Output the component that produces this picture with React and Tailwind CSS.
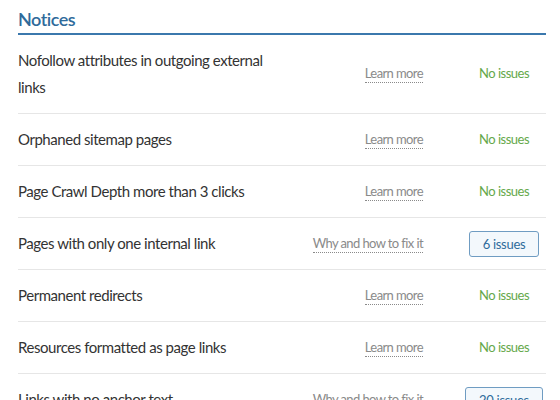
import React from 'react';

const rows = [
  { name: 'Nofollow attributes in outgoing external links', link: 'Learn more', issues: 0 },
  { name: 'Orphaned sitemap pages', link: 'Learn more', issues: 0 },
  { name: 'Page Crawl Depth more than 3 clicks', link: 'Learn more', issues: 0 },
  { name: 'Pages with only one internal link', link: 'Why and how to fix it', issues: 6 },
  { name: 'Permanent redirects', link: 'Learn more', issues: 0 },
  { name: 'Resources formatted as page links', link: 'Learn more', issues: 0 },
  { name: 'Links with no anchor text', link: 'Why and how to fix it', issues: 20 },
];

export default function App() {
  return (
    <div className="w-[560px] h-[400px] overflow-hidden bg-white font-['Lato',sans-serif] text-[#333]">
      <div className="ml-[18px] w-[528px]">
        <h2 className="pt-[8px] pb-[3px] text-[18px] leading-[22px] tracking-[-0.5px] font-semibold text-[#2f6b9b] border-b-2 border-[#3b78ad]">
          Notices
        </h2>
        <ul>
          {rows.map((r) => (
            <li key={r.name} className="flex items-center py-[12px] border-b border-[#e6e6e6]">
              <div className="w-[262px] text-[15px] leading-[27px] tracking-[-0.45px]">{r.name}</div>
              <div className="flex-1 flex justify-end">
                <a className="text-[13px] leading-[17px] tracking-[-0.6px] text-[#8a8a8a] border-b border-dotted border-[#8a8a8a]">
                  {r.link}
                </a>
              </div>
              <div className="w-[123px] pl-[39px] flex justify-center">
                {r.issues === 0 ? (
                  <span className="text-[13px] tracking-[-0.5px] text-[#65a84a]">No issues</span>
                ) : (
                  <span className="px-[13px] h-[26px] leading-[24px] text-[13px] tracking-[-0.3px] text-[#2f6b9b] bg-[#f3f8fc] border border-[#6f9cc2] rounded-[3px]">
                    {r.issues} issues
                  </span>
                )}
              </div>
            </li>
          ))}
        </ul>
      </div>
    </div>
  );
}
